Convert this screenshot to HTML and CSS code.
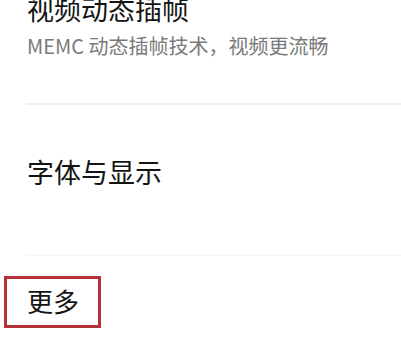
FILE: index.html
```html
<!DOCTYPE html>
<html lang="zh-CN">
<head>
    <meta charset="UTF-8">
    <meta name="viewport" content="width=device-width, initial-scale=1.0">
    <title>设置</title>
    <link rel="stylesheet" href="styles.css">
</head>
<body>
    <div class="settings">
        <div class="item item-sub">
            <div class="item-title">视频动态插帧</div>
            <div class="item-desc">MEMC 动态插帧技术，视频更流畅</div>
        </div>
        <div class="divider"></div>
        <div class="item item-plain">
            <div class="item-title">字体与显示</div>
        </div>
        <div class="divider faint"></div>
        <div class="more-row">
            <div class="more-box">更多</div>
        </div>
    </div>
</body>
</html>
```

FILE: styles.css
```css
body {
    margin: 0;
    padding: 0;
    background-color: #ffffff;
    font-family: "Noto Sans CJK SC", "Noto Sans", sans-serif;
    overflow: hidden;
}
.settings {
    margin-top: -9px;
}
.item {
    padding-left: 27px;
}
.item-title {
    font-size: 27px;
    line-height: 36px;
    color: #141414;
}
.item-desc {
    margin-top: 6px;
    font-size: 20px;
    line-height: 26px;
    color: #7a7a7a;
}
.item-sub {
    padding-bottom: 44px;
}
.divider {
    height: 2px;
    margin-left: 26px;
    background-color: #eeeeee;
}
.divider.faint {
    height: 1px;
    background-color: #f6f6f6;
}
.item-plain {
    padding-top: 49px;
    padding-bottom: 65px;
}
.more-row {
    padding-top: 20px;
    padding-left: 4px;
}
.more-box {
    display: inline-block;
    box-sizing: border-box;
    width: 97px;
    height: 52px;
    padding-left: 20px;
    border: 3px solid #b3323b;
    font-size: 26px;
    line-height: 44px;
    color: #141414;
}
```
